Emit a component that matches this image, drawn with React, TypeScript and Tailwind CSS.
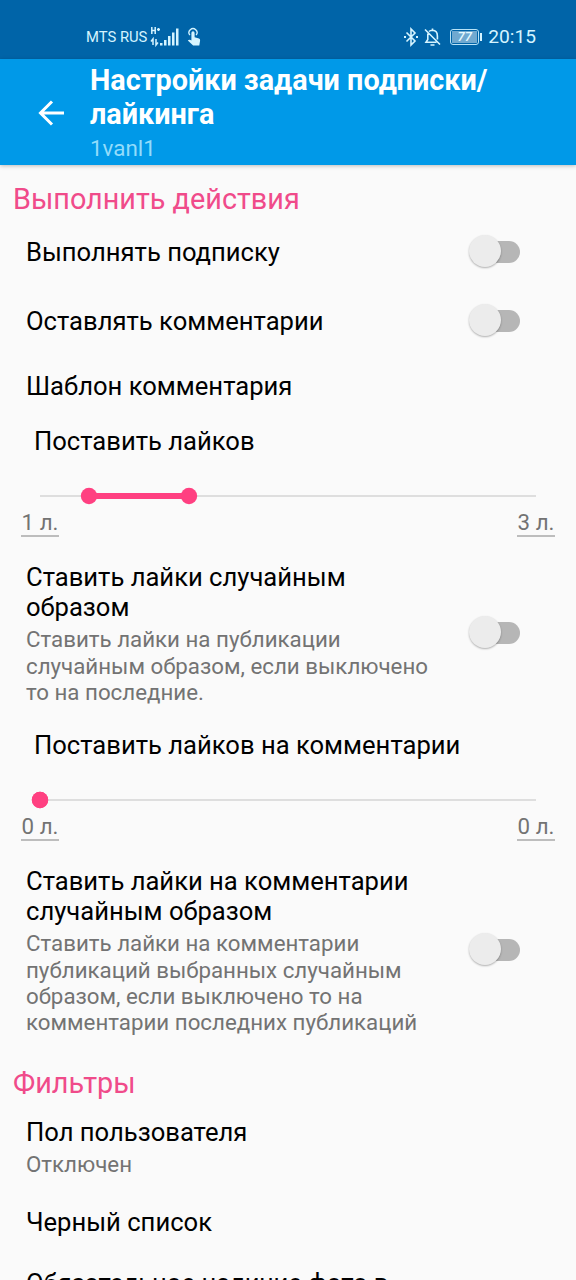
import { FC, ReactNode } from "react";

interface SettingRowProps {
  title: ReactNode;
  summary?: ReactNode;
  hasSwitch?: boolean;
  className?: string;
}

interface RangeSettingProps {
  title: string;
  min: string;
  max: string;
  from: number;
  to: number;
}

const Switch: FC = () => (
  <div
    role="switch"
    aria-checked={false}
    className="relative mr-14 flex h-[33px] w-[52px] shrink-0 items-center justify-end"
  >
    <div className="h-[22px] w-10 rounded-full bg-[#b6b6b6]" />
    <div className="absolute top-0 left-[0.5px] size-[32px] rounded-full bg-[#ececec] shadow-[0_1px_2px_rgba(0,0,0,0.3)]" />
  </div>
);

const SettingRow: FC<SettingRowProps> = ({
  title,
  summary,
  hasSwitch,
  className = "",
}) => (
  <div className={`flex items-center justify-between pl-[26px] ${className}`}>
    <div className="pt-[2px]">
      <div className="text-[25.6px] leading-[30.2px] text-black">{title}</div>
      {summary && (
        <div className="mt-1 text-[22.3px] leading-[26.2px] text-[#737373]">
          {summary}
        </div>
      )}
    </div>
    {hasSwitch && <Switch />}
  </div>
);

const SectionTitle: FC<{ text: string }> = ({ text }) => (
  <h2 className="pl-[13px] text-[28.8px] leading-[34px] text-[#f04b8a]">
    {text}
  </h2>
);

const Limit: FC<{ text: string }> = ({ text }) => (
  <span className="h-[27px] w-[38px] border-b-2 border-[#bdbdbd] text-center text-[22.3px] leading-[25px] whitespace-nowrap text-[#737373]">
    {text}
  </span>
);

const RangeSetting: FC<RangeSettingProps> = ({ title, min, max, from, to }) => (
  <div className="h-[119px]">
    <div className="flex h-[46px] items-center pl-[34px] text-[25.6px] text-black">
      {title}
    </div>
    <svg className="mt-[22px] block h-5 w-full" viewBox="0 0 576 20">
      <path d="M40 10H536" stroke="#dedede" strokeWidth="2" />
      <path d={`M${from} 10H${to}`} stroke="#ff4081" strokeWidth="6" />
      <circle cx={from} cy="10" r="8.2" fill="#ff4081" />
      <circle cx={to} cy="10" r="8.2" fill="#ff4081" />
    </svg>
    <div className="mt-1 flex justify-between px-[21px]">
      <Limit text={min} />
      <Limit text={max} />
    </div>
  </div>
);

const StatusBar: FC = () => (
  <div className="flex h-[59px] shrink-0 items-center bg-[#0064a8] pt-[15px] pr-10 pl-[86px] text-[#d5f4ff]">
    <span className="text-[14.8px] whitespace-nowrap">MTS RUS</span>
    <svg className="ml-[3px] h-5 w-[30px]" viewBox="0 0 30 20" fill="currentColor">
      <path
        d="M1.8 0V7M5.2 0V7M1.8 3.5H5.2M7 2.5H10M8.5 1V4"
        fill="none"
        stroke="currentColor"
        strokeWidth="1.5"
      />
      <path
        d="M3 18V12L1 14.5M6 12V18L8 15.5"
        fill="none"
        stroke="currentColor"
        strokeWidth="1.5"
      />
      <path d="M10 16H12.5V18.5H10ZM14 13H16.5V18.5H14ZM18 9H20.5V18.5H18ZM22 5.5H24.5V18.5H22ZM26 1.5H28.5V18.5H26Z" />
    </svg>
    <svg className="ml-[7px] h-[20px] w-[16px]" viewBox="0 0 16 20" fill="currentColor">
      <path
        d="M2.9 8.2A4 4 0 1 1 9.1 8.2"
        fill="none"
        stroke="currentColor"
        strokeWidth="1.3"
      />
      <path d="M4.4 6Q4.4 4.2 6 4.2Q7.6 4.2 7.6 6V10.2L12 11.5Q13.3 12 13.1 13.4L12.3 18.5H6.1L0.8 13.6Q2 12.2 4.4 13.4Z" />
    </svg>
    <div className="ml-auto flex items-center">
      <svg
        className="h-5 w-4"
        viewBox="0 0 16 20"
        fill="none"
        stroke="currentColor"
        strokeWidth="1.6"
      >
        <path d="M3.5 5.5L12 14L8 18V2L12 6L3.5 14.5" />
        <path d="M1 10H3M13 10H15" strokeWidth="2" />
      </svg>
      <svg
        className="ml-[5px] h-5 w-[17px]"
        viewBox="0 0 17 20"
        fill="none"
        stroke="currentColor"
        strokeWidth="1.6"
      >
        <path d="M1 2.5L16 17.5M5 4.5Q6.2 3.4 8.5 3.3Q13.4 3.6 13.4 9V12.5M3.8 6.5V12.5L2 15.3H12.5M6.5 18H10.5M8.5 1.5V3" />
      </svg>
      <div className="ml-[9px] flex h-4 w-[29px] items-center justify-center rounded-[3px] border border-[#b8e3f7] p-px">
        <span className="flex h-full w-full items-center justify-center bg-[#70a9d0] text-[13px] leading-none font-medium text-[#e5f9ff] italic">
          77
        </span>
      </div>
      <div className="ml-px h-2 w-[2px] bg-[#d5f4ff]" />
      <span className="ml-[6px] text-[19.2px]">20:15</span>
    </div>
  </div>
);

const Header: FC = () => (
  <header className="relative flex h-[106px] shrink-0 items-center bg-[#0099e8] shadow-[0_1px_4px_rgba(0,0,0,0.25)]">
    <svg
      className="mt-[2px] ml-[38px] h-[26px] w-[27px]"
      viewBox="0 0 27 26"
      fill="none"
      stroke="white"
      strokeWidth="3"
    >
      <path d="M26 13H3M14 1.5L2.5 13L14 24.5" />
    </svg>
    <div className="ml-[25px] pt-px">
      <h1 className="text-[28.8px] leading-[33.7px] font-bold whitespace-nowrap text-white">
        Настройки задачи подписки/
        <br />
        лайкинга
      </h1>
      <div className="mt-[3px] text-[22.4px] leading-[26px] text-[#92dcfb]">
        1vanl1
      </div>
    </div>
  </header>
);

export default function App() {
  return (
    <div className="flex h-[1280px] w-[576px] flex-col overflow-hidden bg-[#fafafa] font-[Roboto,sans-serif]">
      <StatusBar />
      <Header />
      <main className="min-h-0 flex-1 overflow-hidden pt-[17px]">
        <SectionTitle text="Выполнить действия" />
        <SettingRow title="Выполнять подписку" hasSwitch className="h-[71px]" />
        <SettingRow
          title="Оставлять комментарии"
          hasSwitch
          className="h-[67px]"
        />
        <SettingRow title="Шаблон комментария" className="h-16 pb-[2px]" />
        <RangeSetting title="Поставить лайков" min="1 л." max="3 л." from={89} to={189} />
        <SettingRow
          title={
            <>
              Ставить лайки случайным
              <br />
              образом
            </>
          }
          summary={
            <>
              Ставить лайки на публикации
              <br />
              случайным образом, если выключено
              <br />
              то на последние.
            </>
          }
          hasSwitch
          className="h-[185px] pt-[6px]"
        />
        <RangeSetting
          title="Поставить лайков на комментарии"
          min="0 л."
          max="0 л."
          from={40}
          to={40}
        />
        <SettingRow
          title={
            <>
              Ставить лайки на комментарии
              <br />
              случайным образом
            </>
          }
          summary={
            <>
              Ставить лайки на комментарии
              <br />
              публикаций выбранных случайным
              <br />
              образом, если выключено то на
              <br />
              комментарии последних публикаций
            </>
          }
          hasSwitch
          className="mb-[11px] h-[214px] pt-[3px]"
        />
        <SectionTitle text="Фильтры" />
        <SettingRow
          title="Пол пользователя"
          summary="Отключен"
          className="h-[92px]"
        />
        <SettingRow title="Черный список" className="h-[60px] pb-px" />
        <SettingRow
          title={
            <>
              Обязательное наличие фото в
              <br />
              профиле
            </>
          }
          className="mt-[14px]"
        />
      </main>
    </div>
  );
}
